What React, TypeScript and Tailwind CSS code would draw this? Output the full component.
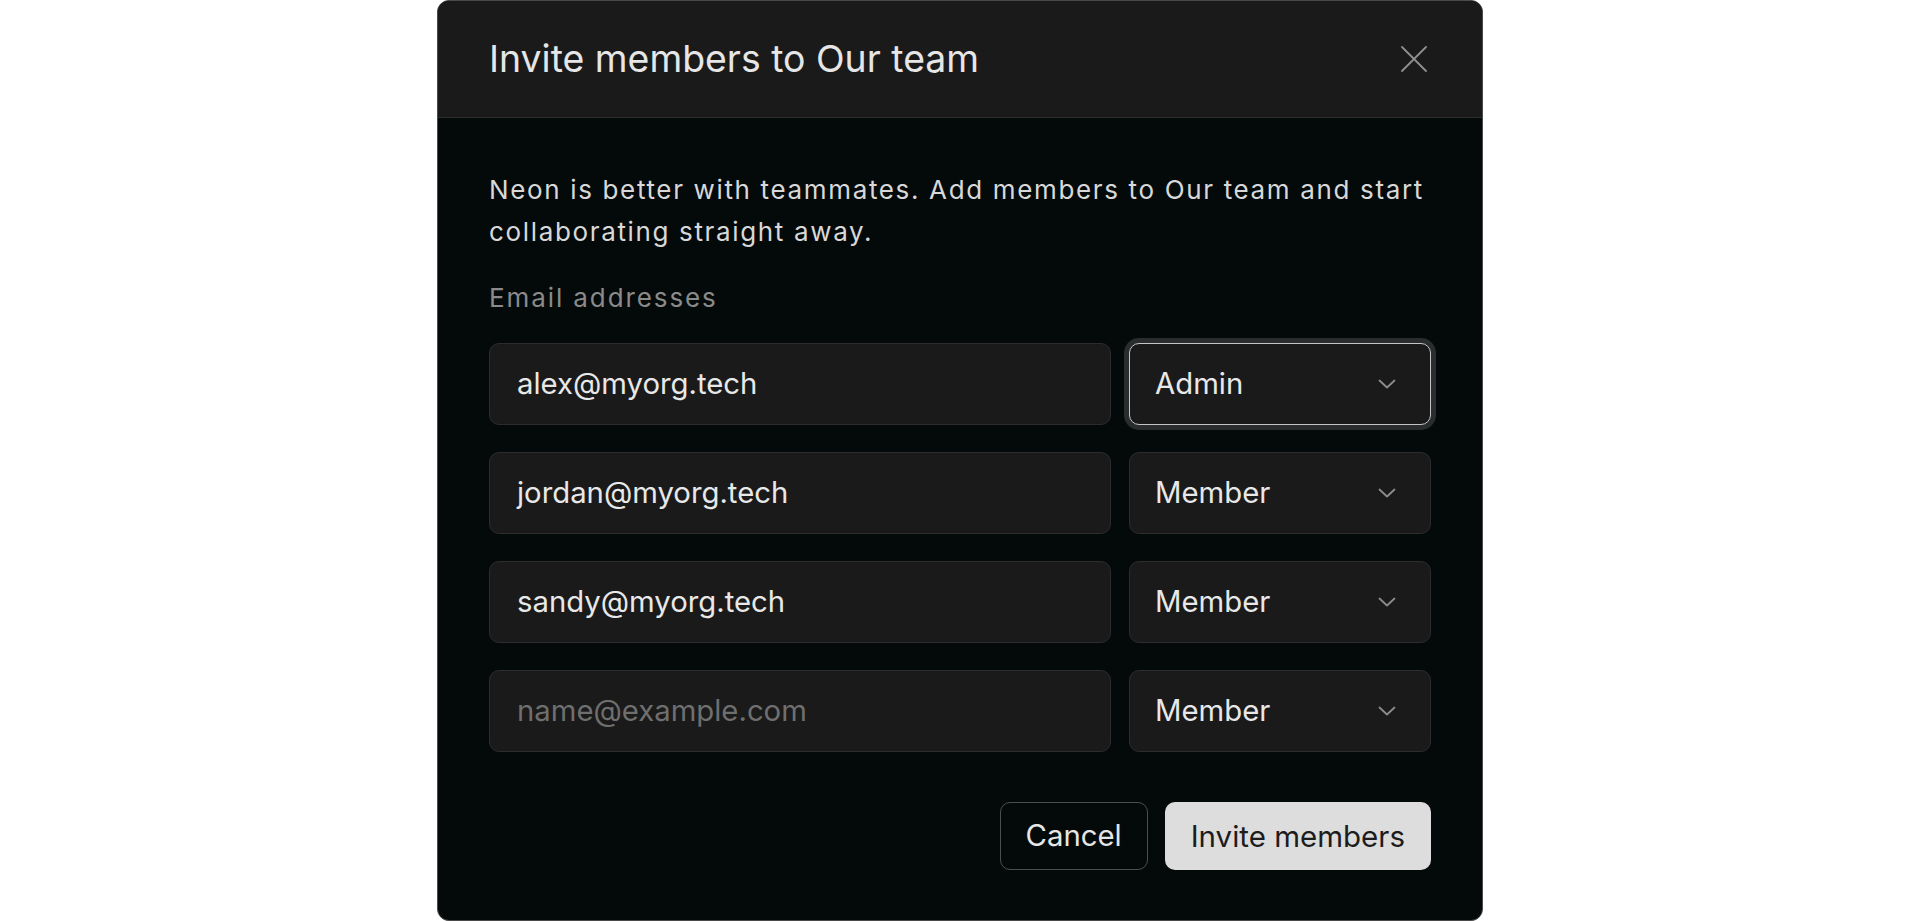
import React from "react";

const rows = [
  { email: "alex@myorg.tech", role: "Admin", focused: true },
  { email: "jordan@myorg.tech", role: "Member" },
  { email: "sandy@myorg.tech", role: "Member" },
  { email: "", role: "Member" },
];

function Chevron() {
  return (
    <svg width="18" height="10" viewBox="0 0 18 10" fill="none" className="shrink-0">
      <path d="M1.5 1.5 9 8.5 16.5 1.5" stroke="#8c8c8c" strokeWidth="1.8" strokeLinecap="round" strokeLinejoin="round" />
    </svg>
  );
}

export default function App() {
  return (
    <div className="min-h-[921px] w-full bg-white flex justify-center" style={{ fontFamily: "Inter, 'Noto Sans', sans-serif" }}>
      <div className="w-[1046px] h-[921px] rounded-[12px] border border-[#4a4a4a] bg-[#040a0a] overflow-hidden flex flex-col">
        <div className="h-[117px] shrink-0 bg-[#1a1a1a] border-b border-[#2e2e2e] px-[51px] flex items-center justify-between">
          <h2 className="text-[37.4px] font-normal text-[#e6e6e6] leading-none">Invite members to Our team</h2>
          <svg width="26" height="26" viewBox="0 0 26 26" fill="none" className="mr-[4px]">
            <path d="M1 1 25 25M25 1 1 25" stroke="#8f8f8f" strokeWidth="1.8" strokeLinecap="round" />
          </svg>
        </div>
        <div className="flex-1 px-[51px] pt-[51px] pb-[50px] flex flex-col">
          <p className="text-[26px] leading-[42px] tracking-[1.65px] text-[#d8d8d8]">
            Neon is better with teammates. Add members to Our team and start collaborating straight away.
          </p>
          <div className="mt-[27px] text-[26px] leading-[36px] tracking-[1.9px] text-[#8a8a8a]">Email addresses</div>
          <div className="mt-[27px] flex flex-col gap-[27px]">
            {rows.map((r, i) => (
              <div key={i} className="flex gap-[18px] h-[82px]">
                <div className="flex-1 rounded-[10px] bg-[#1a1a1a] border border-[#2c2c2c] flex items-center px-[27px] text-[29.3px]">
                  {r.email ? (
                    <span className="text-[#e8e8e8]">{r.email}</span>
                  ) : (
                    <span className="text-[#6f6f6f]">name@example.com</span>
                  )}
                </div>
                <div
                  className={
                    r.focused
                      ? "w-[302px] rounded-[10px] bg-[#1a1a1a] border-[1.5px] border-[#c4c4c4] ring-[5px] ring-[#2a2d2d] flex items-center justify-between pl-[25px] pr-[34px] text-[29.3px] text-[#e8e8e8]"
                      : "w-[302px] rounded-[10px] bg-[#1a1a1a] border border-[#2c2c2c] flex items-center justify-between pl-[25px] pr-[34px] text-[29.3px] text-[#e8e8e8]"
                  }
                >
                  <span>{r.role}</span>
                  <Chevron />
                </div>
              </div>
            ))}
          </div>
          <div className="mt-[50px] flex justify-end gap-[17px]">
            <button className="h-[68px] px-[25px] rounded-[10px] border border-[#4d4d4d] text-[29.3px] text-[#e6e6e6]">Cancel</button>
            <button className="h-[68px] px-[26px] rounded-[10px] bg-[#dddddd] text-[29.5px] text-[#1c1c1c]">Invite members</button>
          </div>
        </div>
      </div>
    </div>
  );
}
